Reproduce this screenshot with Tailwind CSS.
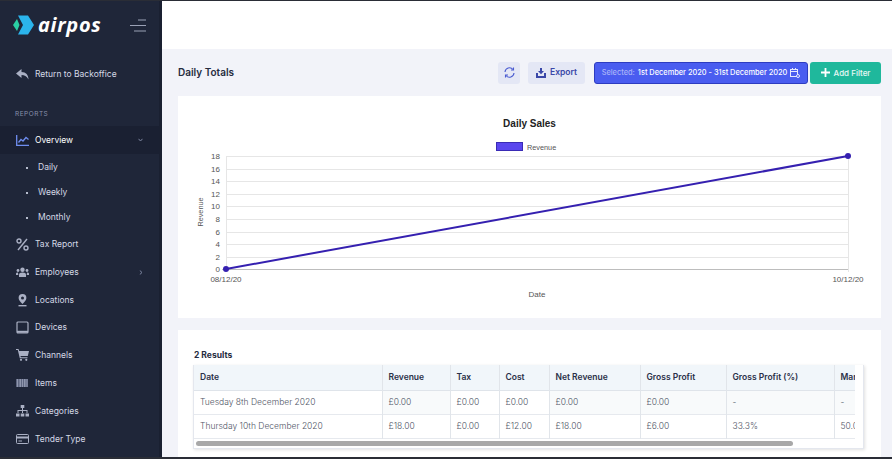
<!DOCTYPE html>
<html lang="en">
  <head>
    <meta charset="UTF-8" />
    <meta name="viewport" content="width=device-width, initial-scale=1.0" />
    <title>Daily Totals | airpos</title>
    <script src="https://cdn.jsdelivr.net/npm/@tailwindcss/browser@4"></script>
  </head>
  <body class="h-[459px] w-[892px] overflow-hidden bg-[#f2f3f9] font-['Inter',sans-serif]">
    <div class="flex h-[459px] border-t border-b-2 border-[#2a2d36]">
      <!-- Sidebar -->
      <aside class="flex w-[162px] shrink-0 flex-col border-r-[3px] border-[#1a2031] bg-[#1f2639] text-[8.500px] text-[#d5d9e6]">
        <div class="flex h-[48px] items-center pl-[13px] pr-[13px]">
          <svg width="21" height="20" viewBox="0 0 21 20">
            <path d="M4 4 L0 10 L4 16 L6.500 10 Z" fill="#2ad0a4" />
            <path d="M5 .500 H15 L21 10 L15 19.500 H5 L10 10 Z" fill="#2bb4ec" />
          </svg>
          <span class="ml-[4px] text-[20px] leading-none font-bold italic tracking-[0.7px] text-white font-['Open_Sans',sans-serif]">airpos</span>
          <svg class="ml-auto" width="16" height="13" viewBox="0 0 16 13" stroke="#9aa1b6" stroke-width="1">
            <path d="M8 1 H16 M0 6.500 H16 M4 12 H16" />
          </svg>
        </div>
        <div class="mt-[12px] flex h-[26px] items-center pl-[16px]">
          <svg width="13" height="11" viewBox="0 0 13 11" fill="#aab0c4"><path d="M5.500 0 L0 4.500 L5.500 9 V6 C8.500 6 10.500 7 12.500 10.500 C12.500 6 10 3 5.500 3 Z" /></svg>
          <span class="ml-[6px]">Return to Backoffice</span>
        </div>
        <div class="mt-[20px] h-[14px] pl-[15px] text-[6.500px] leading-[14px] tracking-[0.5px] text-[#8790ab]">REPORTS</div>
        <div class="mt-[5px] flex h-[28px] items-center bg-[#1a2032] pl-[16px] pr-[16px]">
          <svg width="13" height="11" viewBox="0 0 13 11" fill="none" stroke="#6f8ef0" stroke-width="1.300"><path d="M.700 0 V10.300 H13" /><path d="M2.500 7.500 L5 4.500 L7 6 L10 2.500 L12.500 4.500" /></svg>
          <span class="ml-[6px] text-white">Overview</span>
          <svg class="ml-auto" width="5" height="4" viewBox="0 0 5 4" fill="none" stroke="#7d86a0"><path d="M.500 .800 L2.500 3 L4.500 .800" /></svg>
        </div>
        <nav class="mt-[1px] flex flex-col pl-[26px]">
          <div class="flex h-[25px] items-center"><span class="h-[2px] w-[2px] bg-[#b6bccd]"></span><span class="ml-[10px]">Daily</span></div>
          <div class="flex h-[25px] items-center"><span class="h-[2px] w-[2px] bg-[#b6bccd]"></span><span class="ml-[10px]">Weekly</span></div>
          <div class="flex h-[25px] items-center"><span class="h-[2px] w-[2px] bg-[#b6bccd]"></span><span class="ml-[10px]">Monthly</span></div>
        </nav>
        <nav class="flex flex-col pl-[16px] pr-[16px]">
          <div class="flex h-[28px] items-center">
            <svg width="13" height="13" viewBox="0 0 13 13" fill="none" stroke="#aab0c4" stroke-width="1.400"><circle cx="3" cy="3" r="2" /><circle cx="10" cy="10" r="2" /><path d="M11 1 L2 12" /></svg>
            <span class="ml-[6px]">Tax Report</span>
          </div>
          <div class="flex h-[28px] items-center">
            <svg width="13" height="10" viewBox="0 0 13 10" fill="#aab0c4"><circle cx="6.500" cy="2.800" r="2.200" /><circle cx="2" cy="3.500" r="1.400" /><circle cx="11" cy="3.500" r="1.400" /><path d="M3 10 V7.500 Q3 5.500 6.500 5.500 Q10 5.500 10 7.500 V10 Z" /><path d="M0 8 V6.500 Q0 5.500 2 5.500 L2.300 8 Z M13 8 V6.500 Q13 5.500 11 5.500 L10.700 8 Z" /></svg>
            <span class="ml-[6px]">Employees</span>
            <svg class="ml-auto" width="4" height="5" viewBox="0 0 4 5" fill="none" stroke="#7d86a0"><path d="M.800 .500 L3 2.500 L.800 4.500" /></svg>
          </div>
          <div class="flex h-[28px] items-center">
            <svg width="13" height="13" viewBox="0 0 13 13" fill="#aab0c4"><path fill-rule="evenodd" d="M6.500 0 A3.900 3.900 0 0 1 10.400 3.900 C10.400 6 8 8.500 6.500 10 C5 8.500 2.600 6 2.600 3.900 A3.900 3.900 0 0 1 6.500 0 Z M6.500 2.400 A1.500 1.500 0 1 0 6.500 5.400 A1.500 1.500 0 1 0 6.500 2.400 Z" /><path d="M2.500 11 H10.500 V12.400 H2.500 Z" /></svg>
            <span class="ml-[6px]">Locations</span>
          </div>
          <div class="flex h-[27px] items-center">
            <svg width="13" height="13" viewBox="0 0 13 13" fill="none" stroke="#aab0c4" stroke-width="1.200"><rect x="1" y="1" width="11" height="11" rx="1" /><path d="M1 10.800 H12" stroke-width="2" /></svg>
            <span class="ml-[6px]">Devices</span>
          </div>
          <div class="flex h-[28px] items-center">
            <svg width="13" height="12" viewBox="0 0 13 12" fill="#aab0c4"><path d="M0 0 H2.500 L3.200 2 H13 L11.800 7 H4.500 L4.800 8.200 H11.500 V9.200 H3.800 L1.800 1 H0 Z" /><circle cx="5" cy="10.800" r="1.100" /><circle cx="10.300" cy="10.800" r="1.100" /></svg>
            <span class="ml-[6px]">Channels</span>
          </div>
          <div class="flex h-[28px] items-center">
            <svg width="12" height="8" viewBox="0 0 12 8" fill="#8f96ad"><path d="M0 0 H12 V8 H0 Z" fill="#5f6781" /><path d="M1 0 H2 V8 H1 Z M3.500 0 H5 V8 H3.500 Z M6 0 H7 V8 H6 Z M8 0 H9.500 V8 H8 Z M10.500 0 H11.500 V8 H10.500 Z" /></svg>
            <span class="ml-[7px]">Items</span>
          </div>
          <div class="flex h-[28px] items-center">
            <svg width="13" height="12" viewBox="0 0 13 12" fill="#aab0c4"><path d="M4.700 0 H8.300 V3 H7 V5 H11.500 V8 H10.500 V6 H7 V8 H6 V6 H2.500 V8 H1.500 V5 H6 V3 H4.700 Z" /><path d="M0 8.500 H3.500 V11.500 H0 Z M4.700 8.500 H8.300 V11.500 H4.700 Z M9.500 8.500 H13 V11.500 H9.500 Z" /></svg>
            <span class="ml-[6px]">Categories</span>
          </div>
          <div class="flex h-[28px] items-center">
            <svg width="13" height="10" viewBox="0 0 13 10" fill="none" stroke="#aab0c4"><rect x=".500" y=".500" width="12" height="9" rx="1" /><path d="M.500 3.500 H12.500" stroke-width="2" /><path d="M2.500 7 H6" /></svg>
            <span class="ml-[6px]">Tender Type</span>
          </div>
        </nav>
      </aside>

      <!-- Main -->
      <main class="flex min-w-0 flex-1 flex-col">
        <header class="h-[48px] shrink-0 bg-white"></header>
        <div class="flex h-[47px] shrink-0 items-center pl-[16px] pr-[11px]">
          <h1 class="text-[10px] font-semibold text-[#262c40]">Daily Totals</h1>
          <button class="ml-auto flex h-[22px] w-[22px] items-center justify-center rounded-[3px] bg-[#e4e7f5]">
            <svg width="11" height="11" viewBox="0 0 11 11" fill="none" stroke="#4a5bd0" stroke-width="1.100"><path d="M1 5 A4.500 4.500 0 0 1 9 2.500 M10 6 A4.500 4.500 0 0 1 2 8.500" /><path d="M9.500 .500 V3 H7 M1.500 10.500 V8 H4" /></svg>
          </button>
          <button class="ml-[8px] flex h-[22px] w-[57px] items-center justify-center gap-[4px] rounded-[3px] bg-[#e4e7f5] text-[8.500px] font-semibold text-[#3a47a8]">
            <svg width="10" height="10" viewBox="0 0 10 10" fill="#3a47a8"><path d="M4 0 H6 V3 H8 L5 6.200 L2 3 H4 Z" /><path d="M0 5 H2 V8 H8 V5 H10 V10 H0 Z" /></svg>
            Export
          </button>
          <button class="ml-[9px] flex h-[22px] w-[214px] items-center justify-center gap-[3px] whitespace-nowrap rounded-[3px] border border-[#2d3cc0] bg-[#4a5df0] text-[7.400px] font-medium text-white">
            <span class="text-[#a9b3f8]">Selected:</span>
            <span>1st December 2020 - 31st December 2020</span>
            <svg width="10" height="10" viewBox="0 0 10 10" fill="none" stroke="#e6e9ff"><rect x=".500" y="1.500" width="7" height="7" /><path d="M.500 3.500 H7.500 M2.500 0 V2 M5.500 0 V2" /><circle cx="8" cy="8" r="1.500" fill="#4a5df0" /></svg>
          </button>
          <button class="ml-[2px] flex h-[22px] w-[71px] items-center justify-center gap-[4px] rounded-[3px] bg-[#1fb89c] text-[8px] font-medium text-white/90">
            <svg width="9" height="9" viewBox="0 0 9 9" stroke="#fff" stroke-width="1.800"><path d="M4.500 0 V9 M0 4.500 H9" /></svg>
            Add Filter
          </button>
        </div>

        <!-- Chart card -->
        <section class="ml-[16px] mr-[11px] h-[222px] shrink-0 bg-white">
          <svg width="703" height="222" viewBox="0 0 703 222" class="block font-['Liberation_Sans',sans-serif]">
            <text x="351.500" y="31" text-anchor="middle" font-size="10" font-weight="700" fill="#222">Daily Sales</text>
            <rect x="318.500" y="46.500" width="26" height="8" fill="#5a46ee" stroke="#3a2bb5" />
            <text x="349" y="53.500" font-size="7.300" fill="#555">Revenue</text>

            <g stroke="#e6e6e6" stroke-width="1">
              <path d="M48 60.500 H670 M48 73.500 H670 M48 85.500 H670 M48 98.500 H670 M48 110.500 H670 M48 123.500 H670 M48 136.500 H670 M48 148.500 H670 M48 161.500 H670" />
              <path d="M48.500 60 V173 M670.500 60 V176" />
            </g>
            <path d="M44 173.500 H670" stroke="#bdbdbd" />

            <g font-size="8" fill="#555" text-anchor="end">
              <text x="42" y="63">18</text>
              <text x="42" y="75.500">16</text>
              <text x="42" y="88">14</text>
              <text x="42" y="100.500">12</text>
              <text x="42" y="113">10</text>
              <text x="42" y="126">8</text>
              <text x="42" y="138.500">6</text>
              <text x="42" y="151">4</text>
              <text x="42" y="163.500">2</text>
              <text x="42" y="176">0</text>
            </g>
            <text x="0" y="0" transform="translate(25 116) rotate(-90)" text-anchor="middle" font-size="7.300" fill="#555">Revenue</text>
            <text x="48" y="186" text-anchor="middle" font-size="8" fill="#555">08/12/20</text>
            <text x="670" y="186" text-anchor="middle" font-size="8" fill="#555">10/12/20</text>
            <text x="359" y="201" text-anchor="middle" font-size="8" fill="#555">Date</text>

            <path d="M48 173 L670 60" stroke="#3520b0" stroke-width="2" fill="none" />
            <circle cx="48" cy="173" r="3" fill="#3520b0" />
            <circle cx="670" cy="60" r="3" fill="#3520b0" />
          </svg>
        </section>

        <!-- Results card -->
        <section class="ml-[16px] mr-[11px] mt-[12px] flex-1 bg-white pl-[15px] pr-[17px] pt-[20px]">
          <div class="h-[15px] pl-px text-[8.500px] font-bold leading-[10px] text-[#262c40]">2 Results</div>
          <div class="border border-[#e4e7ee] border-t-0 shadow-[1px_1px_3px_rgba(0,0,0,0.12)]">
            <div class="w-[661px] overflow-hidden">
              <table class="w-[720px] table-fixed border-collapse text-left text-[8.500px] font-light text-[#4f5566]">
                <colgroup>
                  <col class="w-[188px]" />
                  <col class="w-[68px]" />
                  <col class="w-[49px]" />
                  <col class="w-[50px]" />
                  <col class="w-[91px]" />
                  <col class="w-[86px]" />
                  <col class="w-[108px]" />
                  <col class="w-[80px]" />
                </colgroup>
                <thead class="bg-[#f1f6fa] text-[#2a3048]">
                  <tr class="h-[25px] border-b border-[#dfe4ea]">
                    <th class="border-r border-[#e1e5ea] pl-[6px] font-semibold">Date</th>
                    <th class="border-r border-[#e1e5ea] pl-[6px] font-semibold">Revenue</th>
                    <th class="border-r border-[#e1e5ea] pl-[6px] font-semibold">Tax</th>
                    <th class="border-r border-[#e1e5ea] pl-[6px] font-semibold">Cost</th>
                    <th class="border-r border-[#e1e5ea] pl-[6px] font-semibold">Net Revenue</th>
                    <th class="border-r border-[#e1e5ea] pl-[6px] font-semibold">Gross Profit</th>
                    <th class="border-r border-[#e1e5ea] pl-[6px] font-semibold">Gross Profit (%)</th>
                    <th class="pl-[6px] font-semibold">Margin</th>
                  </tr>
                </thead>
                <tbody>
                  <tr class="h-[24px] border-b border-[#e6e9ee]">
                    <td class="border-r border-[#e1e5ea] pl-[6px]">Tuesday 8th December 2020</td>
                    <td class="border-r border-[#e1e5ea] bg-[#f8fafb] pl-[6px]">£0.00</td>
                    <td class="border-r border-[#e1e5ea] pl-[6px]">£0.00</td>
                    <td class="border-r border-[#e1e5ea] pl-[6px]">£0.00</td>
                    <td class="border-r border-[#e1e5ea] bg-[#f8fafb] pl-[6px]">£0.00</td>
                    <td class="border-r border-[#e1e5ea] bg-[#f8fafb] pl-[6px]">£0.00</td>
                    <td class="border-r border-[#e1e5ea] bg-[#f8fafb] pl-[6px]">-</td>
                    <td class="bg-[#f8fafb] pl-[6px]">-</td>
                  </tr>
                  <tr class="h-[24px] border-b border-[#e6e9ee]">
                    <td class="border-r border-[#e1e5ea] pl-[6px]">Thursday 10th December 2020</td>
                    <td class="border-r border-[#e1e5ea] pl-[6px]">£18.00</td>
                    <td class="border-r border-[#e1e5ea] pl-[6px]">£0.00</td>
                    <td class="border-r border-[#e1e5ea] pl-[6px]">£12.00</td>
                    <td class="border-r border-[#e1e5ea] pl-[6px]">£18.00</td>
                    <td class="border-r border-[#e1e5ea] pl-[6px]">£6.00</td>
                    <td class="border-r border-[#e1e5ea] pl-[6px]">33.3%</td>
                    <td class="pl-[6px]">50.0%</td>
                  </tr>
                </tbody>
              </table>
            </div>
            <div class="flex h-[9px] items-center pl-[2px]">
              <div class="h-[5px] w-[597px] rounded-[3px] bg-[#a8a8a8]"></div>
            </div>
          </div>
        </section>
      </main>
    </div>
  </body>
</html>
